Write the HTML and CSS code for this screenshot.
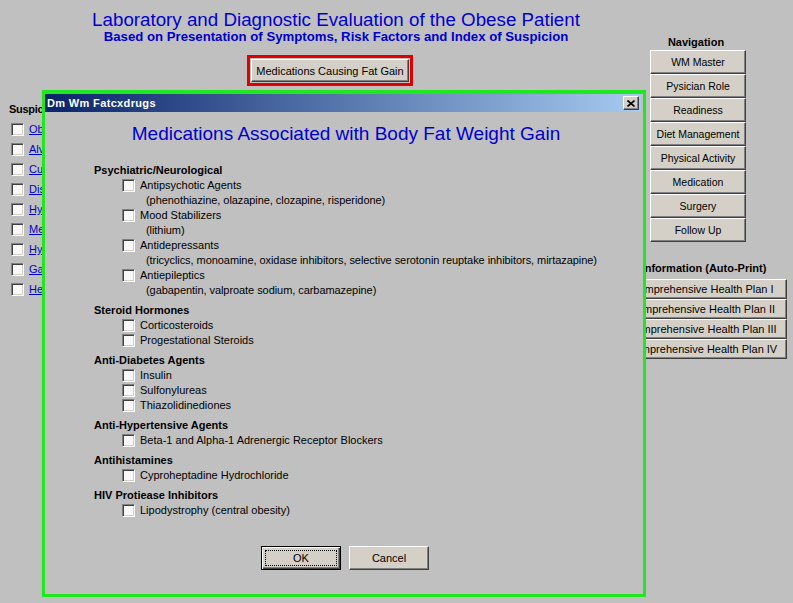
FILE: index.html
```html
<!DOCTYPE html>
<html>
<head>
<meta charset="utf-8">
<title>Laboratory and Diagnostic Evaluation of the Obese Patient</title>
<link rel="stylesheet" href="styles.css">
</head>
<body>
<div class="page">
  <div class="main">
    <header class="head">
      <h1 class="title">Laboratory and Diagnostic Evaluation of the Obese Patient</h1>
      <h2 class="subtitle">Based on Presentation of Symptoms, Risk Factors and Index of Suspicion</h2>
      <div class="hl-frame"><button class="btn btn-med">Medications Causing Fat Gain</button></div>
    </header>
    <section class="susp">
      <div class="susp-label">Suspic</div>
      <ul class="susp-list">
        <li><span class="cb"></span><a href="#">Ob</a></li>
        <li><span class="cb"></span><a href="#">Alv</a></li>
        <li><span class="cb"></span><a href="#">Cu</a></li>
        <li><span class="cb"></span><a href="#">Dis</a></li>
        <li><span class="cb"></span><a href="#">Hy</a></li>
        <li><span class="cb"></span><a href="#">Me</a></li>
        <li><span class="cb"></span><a href="#">Hy</a></li>
        <li><span class="cb"></span><a href="#">Ga</a></li>
        <li><span class="cb"></span><a href="#">He</a></li>
      </ul>
    </section>
  </div>

  <aside class="side">
    <div class="side-label nav-label">Navigation</div>
    <div class="nav">
      <button class="btn nav-btn">WM Master</button>
      <button class="btn nav-btn">Pysician Role</button>
      <button class="btn nav-btn">Readiness</button>
      <button class="btn nav-btn">Diet Management</button>
      <button class="btn nav-btn">Physical Activity</button>
      <button class="btn nav-btn">Medication</button>
      <button class="btn nav-btn">Surgery</button>
      <button class="btn nav-btn">Follow Up</button>
    </div>
    <div class="side-label info-label">Information (Auto-Print)</div>
    <div class="info">
      <button class="btn info-btn">Comprehensive Health Plan I</button>
      <button class="btn info-btn">Comprehensive Health Plan II</button>
      <button class="btn info-btn">Comprehensive Health Plan III</button>
      <button class="btn info-btn">Comprehensive Health Plan IV</button>
    </div>
  </aside>

  <div class="dialog">
    <div class="titlebar">
      <span class="tb-text">Dm Wm Fatcxdrugs</span>
      <span class="tb-close"><svg width="8" height="7" viewBox="0 0 8 7"><path d="M0.5 0.5 L7.5 6.5 M7.5 0.5 L0.5 6.5" stroke="#000" stroke-width="1.6"/></svg></span>
    </div>
    <h3 class="dlg-head">Medications Associated with Body Fat Weight Gain</h3>
    <div class="groups">
      <div class="grp">
        <div class="grp-title">Psychiatric/Neurological</div>
        <div class="item"><span class="cb"></span>Antipsychotic Agents</div>
        <div class="desc">(phenothiazine, olazapine, clozapine, risperidone)</div>
        <div class="item"><span class="cb"></span>Mood Stabilizers</div>
        <div class="desc">(lithium)</div>
        <div class="item"><span class="cb"></span>Antidepressants</div>
        <div class="desc">(tricyclics, monoamine, oxidase inhibitors, selective serotonin reuptake inhibitors, mirtazapine)</div>
        <div class="item"><span class="cb"></span>Antiepileptics</div>
        <div class="desc">(gabapentin, valproate sodium, carbamazepine)</div>
      </div>
      <div class="grp">
        <div class="grp-title">Steroid Hormones</div>
        <div class="item"><span class="cb"></span>Corticosteroids</div>
        <div class="item"><span class="cb"></span>Progestational Steroids</div>
      </div>
      <div class="grp">
        <div class="grp-title">Anti-Diabetes Agents</div>
        <div class="item"><span class="cb"></span>Insulin</div>
        <div class="item"><span class="cb"></span>Sulfonylureas</div>
        <div class="item"><span class="cb"></span>Thiazolidinediones</div>
      </div>
      <div class="grp">
        <div class="grp-title">Anti-Hypertensive Agents</div>
        <div class="item"><span class="cb"></span>Beta-1 and Alpha-1 Adrenergic Receptor Blockers</div>
      </div>
      <div class="grp">
        <div class="grp-title">Antihistamines</div>
        <div class="item"><span class="cb"></span>Cyproheptadine Hydrochloride</div>
      </div>
      <div class="grp">
        <div class="grp-title">HIV Protiease Inhibitors</div>
        <div class="item"><span class="cb"></span>Lipodystrophy (central obesity)</div>
      </div>
    </div>
    <div class="dlg-foot">
      <button class="btn dlg-btn btn-default"><span class="focus">OK</span></button>
      <button class="btn dlg-btn">Cancel</button>
    </div>
  </div>
</div>
</body>
</html>
```

FILE: styles.css
```css
html, body {
  margin: 0;
  padding: 0;
  background: #c0c0c0;
}

body {
  font-family: "Liberation Sans", Arial, sans-serif;
  font-size: 11px;
  color: #000;
}

.page {
  position: relative;
  width: 793px;
  height: 603px;
  overflow: hidden;
  display: grid;
  grid-template-columns: 617px 176px;
}

/* ---------- header ---------- */
.head {
  padding: 10px 0 0 55px;
  text-align: center;
}

.title {
  margin: 0;
  font-size: 18.75px;
  font-weight: normal;
  line-height: 19px;
  color: #0000cc;
}

.subtitle {
  margin: 0;
  font-size: 13.2px;
  font-weight: bold;
  line-height: 15px;
  color: #0000cc;
}

.hl-frame {
  width: 166px;
  height: 31px;
  box-sizing: border-box;
  margin: 11px 0 0 192px;
  border: 3px solid #e00000;
  padding: 1px;
  display: flex;
}

/* ---------- buttons ---------- */
.btn {
  font-family: "Liberation Sans", Arial, sans-serif;
  font-size: 11px;
  color: #000;
  background: #d4d0c8;
  border: 1px solid;
  border-color: #ffffff #404040 #404040 #ffffff;
  box-shadow: inset -1px -1px 0 #808080;
  padding: 0;
  margin: 0;
  box-sizing: border-box;
  cursor: default;
}

.btn-med {
  flex: 1;
}

/* ---------- suspicion list (mostly hidden by the dialog) ---------- */
.susp {
  margin: 17px 0 0 9px;
  white-space: nowrap;
}

.susp-label {
  font-weight: bold;
  line-height: 13px;
  height: 16px;
  letter-spacing: -0.3px;
}

.susp-list {
  list-style: none;
  margin: 0;
  padding: 0 0 0 2px;
}

.susp-list li {
  height: 20px;
  display: flex;
  align-items: center;
  gap: 5px;
}

.susp-list a {
  color: #0000cc;
  text-decoration: underline;
}

/* ---------- checkbox ---------- */
.cb {
  display: inline-block;
  flex: none;
  width: 13px;
  height: 13px;
  box-sizing: border-box;
  background: #f8f8f8;
  border: 1px solid;
  border-color: #808080 #ffffff #ffffff #808080;
  box-shadow: inset 1px 1px 0 #404040, inset -1px -1px 0 #d4d0c8;
}

/* ---------- side column ---------- */
.side {
  padding-top: 36px;
  display: flex;
  flex-direction: column;
}

.side-label {
  font-weight: bold;
  text-align: center;
  line-height: 13px;
}

.nav-label {
  width: 96px;
  margin-left: 31px;
  height: 14px;
}

.nav {
  display: flex;
  flex-direction: column;
  margin-left: 33px;
  width: 96px;
}

.nav-btn {
  height: 24px;
  font-size: 10.5px;
}

.info-label {
  width: 174px;
  margin-top: 20px;
  height: 17px;
}

.info {
  display: flex;
  flex-direction: column;
  width: 170px;
}

.info-btn {
  height: 20px;
  font-size: 11px;
}

/* ---------- dialog ---------- */
.dialog {
  position: absolute;
  left: 42px;
  top: 90px;
  width: 604px;
  height: 507px;
  box-sizing: border-box;
  border: 3px solid #1fe81f;
  border-top-width: 4px;
  background: #c0c0c0;
  padding: 0 2px 0 0;
  display: flex;
  flex-direction: column;
}

.titlebar {
  height: 18px;
  flex: none;
  background: linear-gradient(to right, #0a246a, #a6caf0);
  display: flex;
  align-items: center;
  justify-content: space-between;
  padding: 0 2px 0 2px;
}

.tb-text {
  color: #fff;
  font-weight: bold;
  font-size: 11px;
  letter-spacing: 0.35px;
}

.tb-close {
  width: 16px;
  height: 14px;
  box-sizing: border-box;
  background: #d4d0c8;
  border: 1px solid;
  border-color: #ffffff #404040 #404040 #ffffff;
  box-shadow: inset -1px -1px 0 #808080;
  display: flex;
  align-items: center;
  justify-content: center;
}

.tb-close svg {
  display: block;
}

.dlg-head {
  margin: 11px 0 0 0;
  padding-left: 6px;
  font-size: 19px;
  font-weight: normal;
  line-height: 22px;
  text-align: center;
  color: #0000cc;
}

.groups {
  margin-top: 18px;
  padding-left: 49px;
}

.grp + .grp {
  margin-top: 5px;
}

.grp-title {
  font-weight: bold;
  line-height: 15px;
}

.item {
  line-height: 15px;
  height: 15px;
  display: flex;
  align-items: center;
  gap: 5px;
  padding-left: 28px;
}

.desc {
  line-height: 15px;
  padding-left: 52px;
  letter-spacing: -0.06px;
}

.dlg-foot {
  margin-top: 28px;
  display: flex;
  justify-content: center;
  gap: 8px;
  padding-left: 4px;
}

.dlg-btn {
  width: 80px;
  height: 24px;
  font-size: 11px;
}

.btn-default {
  border: 1px solid #000;
  box-shadow: inset 1px 1px 0 #ffffff, inset -1px -1px 0 #404040, inset -2px -2px 0 #808080;
  padding: 3px;
  display: flex;
}

.focus {
  flex: 1;
  border: 1px dotted #000;
  display: flex;
  align-items: center;
  justify-content: center;
}
```
